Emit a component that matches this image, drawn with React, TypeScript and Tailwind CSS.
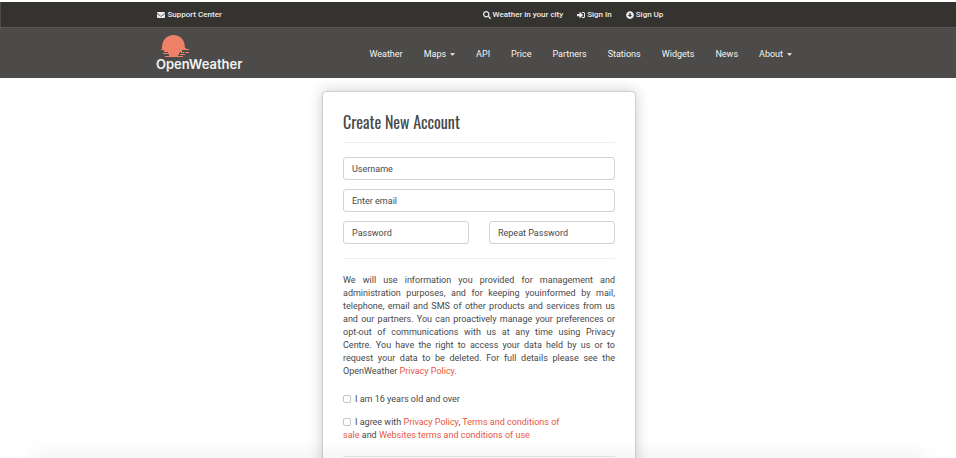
import React from "react";
import { FaEnvelope, FaSearch, FaSignInAlt, FaArrowAltCircleDown } from "react-icons/fa";

const navItems = [
  { label: "Weather" },
  { label: "Maps", menu: true },
  { label: "API" },
  { label: "Price" },
  { label: "Partners" },
  { label: "Stations" },
  { label: "Widgets" },
  { label: "News" },
  { label: "About", menu: true },
];

function TopLink({ icon, children }: { icon: React.ReactNode; children: React.ReactNode }) {
  return (
    <a href="#" className="flex items-center gap-0.5 whitespace-nowrap">
      {icon}
      {children}
    </a>
  );
}

function Field({ label, type, id }: { label: string; type: string; id: string }) {
  return (
    <input
      id={id}
      type={type}
      aria-label={label}
      placeholder={label}
      className="block h-[23px] w-full min-w-0 rounded-[3px] border border-[#d2d2d2] bg-white px-2 text-[#48484a] outline-none placeholder:text-[#48484a] placeholder:opacity-100"
    />
  );
}

function Check({ id }: { id: string }) {
  return (
    <input
      id={id}
      type="checkbox"
      className="mr-1 inline-block size-2 appearance-none rounded-[2px] border border-[#c4c4c4] bg-white align-[-1px] checked:bg-[#eb6e4b]"
    />
  );
}

function Link({ children }: { children: React.ReactNode }) {
  return (
    <a href="#" className="text-[#e9573f]">
      {children}
    </a>
  );
}

function Logo() {
  return (
    <a href="#" aria-label="OpenWeather" className="block text-[#f2f2f0]">
      <svg viewBox="0 0 32 22" className="ml-1 block h-[22px] w-8" fill="#ee8168" aria-hidden="true">
        <path d="M2 13C2 5 7 0 13.500 0S25 5 25 13h1v1h3v1H1v-1h1z" />
        <path d="M4 15h18v2H4zM8 17h12v1H8zM21 17h3v1h-3zM25 17h4v1h-4zM3 18h16v1H3zM9 19h10v1H9zM20 19h5v1h-5zM9 20h9v1H9zM5 21h18v1H5z" />
      </svg>
      <span className="block font-[Inter,sans-serif] text-[13px]/[14px] font-semibold">OpenWeather</span>
    </a>
  );
}

export default function App() {
  return (
    <div className="min-h-screen overflow-hidden bg-white pt-0.5 font-[Roboto,sans-serif] text-[9px]/[13px] text-[#48484a]">
      <div className="border-l border-[#4c4b49] bg-[#343330] text-[8px] font-medium text-[#ececec]">
        <div className="mx-auto grid h-[25px] max-w-[644px] grid-cols-2 items-center">
          <TopLink icon={<FaEnvelope className="mr-px size-2" />}>Support Center</TopLink>
          <div className="flex gap-3.5 pl-1">
            <TopLink icon={<FaSearch className="size-2" />}>Weather in your city</TopLink>
            <TopLink icon={<FaSignInAlt className="size-2" />}>Sign In</TopLink>
            <TopLink icon={<FaArrowAltCircleDown className="size-2" />}>Sign Up</TopLink>
          </div>
        </div>
      </div>
      <header className="border-t border-dotted border-[#656462] bg-[#4c4b49]">
        <div className="mx-auto flex h-[50px] max-w-[644px] items-center justify-between pr-2">
          <Logo />
          <nav className="flex gap-[21px] pt-0.5 text-[#f4f4f4]">
            {navItems.map((item) => (
              <a key={item.label} href="#" className="flex items-center gap-1">
                {item.label}
                {item.menu && (
                  <svg viewBox="0 0 6 3" className="h-[3px] w-[5px]" fill="currentColor" aria-hidden="true">
                    <path d="M0 0h6L3 3z" />
                  </svg>
                )}
              </a>
            ))}
          </nav>
        </div>
      </header>
      <main className="pt-[13px] pl-0.5">
        <form className="mx-auto w-full max-w-[314px] rounded-[4px] border border-[#cfcfcf] bg-white px-5 pt-[17px] pb-5 shadow-[0_0_14px_rgba(0,0,0,0.2)]">
          <h1 className="border-b border-[#eeeeee] pb-[7px] font-[Oswald,'Roboto_Condensed','Open_Sans_Condensed','Noto_Sans_CJK_SC',sans-serif] text-[16px]/[26px]">
            Create New Account
          </h1>
          <div className="mt-3.5 grid grid-cols-2 gap-x-5 gap-y-[9px]">
            <div className="col-span-2">
              <Field id="username" type="text" label="Username" />
            </div>
            <div className="col-span-2">
              <Field id="email" type="email" label="Enter email" />
            </div>
            <Field id="password" type="password" label="Password" />
            <Field id="repeat" type="password" label="Repeat Password" />
          </div>
          <p className="mt-3.5 border-t border-[#eeeeee] pt-[15px] text-justify">
            We will use information you provided for management and administration purposes, and for keeping youinformed
            by mail, telephone, email and SMS of other products and services from us and our partners. You can
            proactively manage your preferences or opt-out of communications with us at any time using Privacy Centre.
            You have the right to access your data held by us or to request your data to be deleted. For full details
            please see the OpenWeather <Link>Privacy Policy</Link>.
          </p>
          <div className="mt-[15px]">
            <Check id="age" />
            <label htmlFor="age">I am 16 years old and over</label>
          </div>
          <div className="mt-2.5 max-w-[230px]">
            <Check id="agree" />
            <label htmlFor="agree">
              I agree with <Link>Privacy Policy</Link>, <Link>Terms and conditions of sale</Link> and{" "}
              <Link>Websites terms and conditions of use</Link>
            </label>
          </div>
          <hr className="mt-3.5 border-[#e8e8e8]" />
        </form>
      </main>
      <div className="pointer-events-none fixed inset-x-8 -bottom-1 h-1 shadow-[0_0_20px_rgba(0,0,0,0.22)]" />
    </div>
  );
}
